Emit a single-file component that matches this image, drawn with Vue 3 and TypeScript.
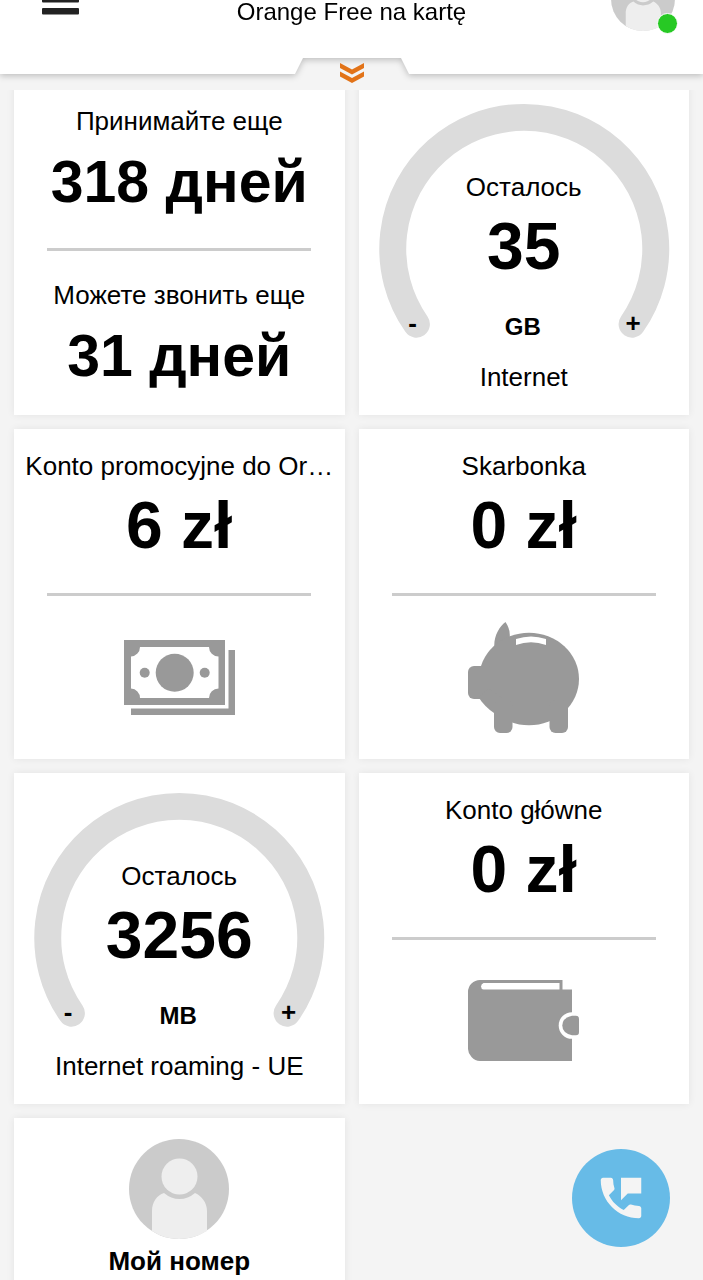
<script setup lang="ts">
interface Gauge {
  kind: 'gauge'
  value: string
  unit: string
  name: string
}

interface Account {
  kind: 'account'
  name: string
  value: string
  icon: 'notes' | 'piggy' | 'wallet'
}

interface Validity {
  kind: 'validity'
  items: { label: string; value: string }[]
}

type Card = Gauge | Account | Validity

const cards: Card[] = [
  {
    kind: 'validity',
    items: [
      { label: 'Принимайте еще', value: '318 дней' },
      { label: 'Можете звонить еще', value: '31 дней' },
    ],
  },
  { kind: 'gauge', value: '35', unit: 'GB', name: 'Internet' },
  { kind: 'account', name: 'Konto promocyjne do Or…', value: '6 zł', icon: 'notes' },
  { kind: 'account', name: 'Skarbonka', value: '0 zł', icon: 'piggy' },
  { kind: 'gauge', value: '3256', unit: 'MB', name: 'Internet roaming - UE' },
  { kind: 'account', name: 'Konto główne', value: '0 zł', icon: 'wallet' },
]
</script>

<template>
  <div class="screen">
    <header class="topbar">
      <div class="topbar-shape">
        <div class="topbar-row">
          <button class="menu" type="button" aria-label="Menu">
            <svg width="37" height="15" viewBox="0 0 37 15">
              <path d="M0 0H37V1.500Q37 2.500 36 2.500H1Q0 2.500 0 1.500Z" fill="#222" />
              <rect y="8" width="37" height="6.500" rx="1" fill="#222" />
            </svg>
          </button>
          <h1 class="title">Orange Free na kartę</h1>
          <button class="profile" type="button" aria-label="Profil">
            <svg width="64" height="64" viewBox="0 0 100 100">
              <circle cx="50" cy="50" r="50" fill="#cbcbcb" />
              <circle cx="50" cy="37" r="18" fill="#eee" />
              <path d="M23 92V72C23 63 28 56 35 54Q42 60 50 60Q59 60 66 54C73 57 78 64 78 72V92Q65 100 50 100Q35 100 23 92Z" fill="#eee" />
            </svg>
            <span class="status"></span>
          </button>
        </div>
        <div class="topbar-edge">
          <span class="edge-side"></span>
          <svg width="116" height="16" viewBox="0 0 116 16">
            <path d="M0 0H9L1 16H0ZM116 0H107L115 16H116Z" fill="#fff" />
          </svg>
          <span class="edge-side"></span>
        </div>
      </div>
      <button class="expand" type="button" aria-label="Rozwiń">
        <svg width="24" height="20" viewBox="0 0 24 20">
          <path d="M0 0L12 6.500L24 0V5L12 11.500L0 5ZM0 8.500L12 15L24 8.500V13.500L12 20L0 13.500Z" fill="#e27318" />
        </svg>
      </button>
    </header>

    <main class="grid">
      <section v-for="(card, i) in cards" :key="i" class="card">
        <template v-if="card.kind === 'validity'">
          <template v-for="(item, n) in card.items" :key="item.label">
            <hr v-if="n > 0" class="divider" />
            <p class="label">{{ item.label }}</p>
            <p class="days">{{ item.value }}</p>
          </template>
        </template>

        <template v-else-if="card.kind === 'account'">
          <h2 class="label">{{ card.name }}</h2>
          <p class="amount">{{ card.value }}</p>
          <hr class="divider" />
          <svg v-if="card.icon === 'notes'" class="icon" viewBox="0 0 111 111">
            <path fill-rule="evenodd" d="M0 18H101V83H0ZM16 25A9.500 9.500 0 0 1 7 34.500V66.500A9.500 9.500 0 0 1 16 76H85A9.500 9.500 0 0 1 94.500 66.500V34.500A9.500 9.500 0 0 1 85 25Z" />
            <circle cx="50.700" cy="50.700" r="19" />
            <circle cx="20.700" cy="50.700" r="5" />
            <circle cx="80.700" cy="50.700" r="5" />
            <path d="M104.500 28H111V93H7V86.500H104.500Z" />
          </svg>
          <svg v-else-if="card.icon === 'piggy'" class="icon" viewBox="0 0 111 111">
            <path d="M26.500 27C25 15 31 5 37.500 0Q43 8 41.500 17L41 40H26Z" />
            <ellipse cx="61" cy="57" rx="50" ry="46.300" />
            <rect y="44" width="26" height="33" rx="6" />
            <path d="M11 76Q17 85 26 91L40 80L20 66Z" />
            <rect x="26" y="78" width="18.500" height="33" rx="6" />
            <rect x="81.500" y="78" width="18.500" height="33" rx="6" />
            <path class="cut" d="M48 17Q63 12 78 17V23Q63 17.500 48 23Z" />
          </svg>
          <svg v-else class="icon" viewBox="0 0 111 111">
            <path d="M12 14H94.500V23.500H104V95H12Q7 95 3.500 91T0 83V26Q0 21 3.500 17.500T12 14Z" />
            <path class="cut" d="M15.500 17H91.500V23.500H15.500Q13 23 13 20.500T15.500 17Z" />
            <circle class="cut" cx="104" cy="59.500" r="13.300" />
            <path d="M104 49.700H108Q111 49.700 111 53V66Q111 69.300 108 69.300H104Q94.300 67 94.300 59.500T104 49.700Z" />
          </svg>
        </template>

        <template v-else>
          <svg class="arc" viewBox="0 0 331 331">
            <path d="M57.500 240.500A131.700 131.700 0 1 1 273.500 240.500" fill="none" stroke="#dcdcdc" stroke-width="27" stroke-linecap="round" />
          </svg>
          <div class="gauge">
            <p class="label">Осталось</p>
            <p class="amount">{{ card.value }}</p>
            <div class="gauge-row">
              <button class="step" type="button">-</button>
              <span class="unit">{{ card.unit }}</span>
              <button class="step" type="button">+</button>
            </div>
            <h2 class="label">{{ card.name }}</h2>
          </div>
        </template>
      </section>

      <section class="card">
        <svg class="avatar" viewBox="0 0 100 100">
          <circle cx="50" cy="50" r="50" fill="#cbcbcb" />
          <circle cx="50.500" cy="37.500" r="18" fill="#eee" />
          <path d="M23 92V72C23 63 28 56 35 54Q42 60 50.500 60Q59 60 66 54C73 57 78 64 78 72V92Q65 100 50 100Q35 100 23 92Z" fill="#eee" />
        </svg>
        <h2 class="label strong">Мой номер</h2>
      </section>
    </main>

    <button class="fab" type="button" aria-label="Kontakt">
      <svg width="54" height="54" viewBox="0 0 24 24" fill="#f4f4f4">
        <path d="M20 15.500c-1.250 0-2.450-.2-3.570-.57-.35-.11-.74-.03-1.020.24l-2.200 2.200c-2.830-1.440-5.150-3.750-6.590-6.580l2.200-2.210c.28-.27.36-.66.25-1.010C8.700 6.450 8.500 5.250 8.500 4c0-.55-.45-1-1-1H4c-.55 0-1 .45-1 1 0 9.390 7.610 17 17 17 .55 0 1-.45 1-1v-3.500c0-.55-.45-1-1-1zM12 3v10l3-3h6V3h-9z" />
      </svg>
    </button>
  </div>
</template>

<style>
body {
  margin: 0;
  background: #f4f4f4;
}
</style>

<style scoped>
.screen {
  position: relative;
  height: 100vh;
  overflow: hidden;
  background: #f4f4f4;
  color: #000;
  font-family: "Liberation Sans", Arial, Helvetica, sans-serif;
}

button {
  padding: 0;
  border: 0;
  background: none;
  color: inherit;
  font: inherit;
  cursor: pointer;
}

svg {
  display: block;
}

h1,
h2,
p {
  margin: 0;
  font-weight: 400;
}

.topbar {
  position: relative;
  z-index: 1;
  height: 90px;
  overflow: hidden;
  background: #f4f4f4;
}

.topbar-shape {
  filter: drop-shadow(0 2px 3px rgba(0, 0, 0, 0.22));
}

.topbar-row {
  display: grid;
  grid-template-columns: 1fr auto 1fr;
  align-items: start;
  height: 58px;
  padding: 0 28px;
  box-sizing: border-box;
  background: #fff;
}

.menu {
  justify-self: start;
  margin-left: 14px;
}

.title {
  font-size: 24px;
  line-height: 24px;
}

.profile {
  position: relative;
  justify-self: end;
  margin-top: -33px;
}

.status {
  position: absolute;
  right: -3px;
  bottom: -3px;
  width: 19px;
  height: 19px;
  border: 1px solid #fff;
  border-radius: 50%;
  background: #27c924;
}

.topbar-edge {
  display: flex;
}

.edge-side {
  flex: 1;
  background: #fff;
}

.expand {
  position: absolute;
  top: 63px;
  left: 50%;
  transform: translateX(-50%);
}

.grid {
  display: grid;
  grid-template-columns: 1fr 1fr;
  gap: 14px;
  margin-top: -6px;
  padding: 0 14px;
}

.card {
  position: relative;
  display: flex;
  flex-direction: column;
  align-items: center;
  min-width: 0;
  aspect-ratio: 1;
  padding-top: 21px;
  box-sizing: border-box;
  background: #fff;
  box-shadow: 0 0 8px rgba(0, 0, 0, 0.07);
  text-align: center;
}

.label {
  max-width: 100%;
  font-size: 26px;
  line-height: 32px;
  white-space: nowrap;
}

.strong {
  margin-top: 6px;
  font-weight: 700;
}

.days,
.amount {
  margin-top: 11px;
  font-size: 66px;
  font-weight: 700;
  line-height: 64px;
}

.days {
  margin-top: 15px;
  font-size: 59px;
  line-height: 60px;
}

.divider {
  width: 80%;
  height: 3px;
  margin: 36px 0 26px;
  border: 0;
  background: #ccc;
}

.divider + .label {
  margin-top: 2px;
}

.icon {
  width: 111px;
  height: 111px;
  fill: #999;
}

.cut {
  fill: #fff;
}

.arc {
  position: absolute;
  inset: 0;
  width: 100%;
  height: 100%;
}

.gauge {
  position: relative;
  width: 100%;
  padding-top: 66px;
}

.gauge-row {
  display: grid;
  grid-template-columns: 28px 1fr 28px;
  align-items: start;
  margin: 33px 0 18px;
  padding: 0 42px 0 40px;
}

.step {
  font-size: 26px;
  font-weight: 700;
  line-height: 24px;
}

.unit {
  font-size: 24px;
  font-weight: 700;
  line-height: 32px;
}

.avatar {
  width: 100px;
  height: 100px;
}

.fab {
  position: absolute;
  right: 33px;
  bottom: 33px;
  z-index: 2;
  display: flex;
  align-items: center;
  justify-content: center;
  width: 98px;
  height: 98px;
  border-radius: 50%;
  background: #67bbe7;
}
</style>
